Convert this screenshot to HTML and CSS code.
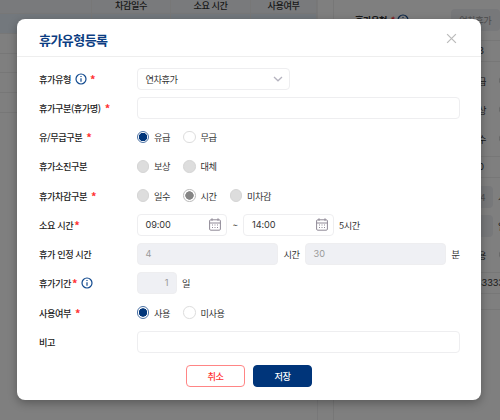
FILE: index.html
```
<!DOCTYPE html>
<html lang="ko">
<head>
    <meta charset="UTF-8">
    <meta name="viewport" content="width=device-width, initial-scale=1.0">
    <title>휴가유형등록</title>
    <link rel="stylesheet" href="styles.css">
</head>
<body>
    <!-- 휴가유형 관리 화면 -->
    <div class="page">
        <div class="list">
            <div class="list-row list-head"><span></span><span>차감일수</span><span>소요 시간</span><span>사용여부</span></div>
            <div class="list-row selected"><span></span><span></span><span></span><span></span></div>
            <div class="list-row"><span></span><span></span><span></span><span></span></div>
            <div class="list-row"><span></span><span></span><span></span><span></span></div>
            <div class="list-row"><span></span><span></span><span></span><span></span></div>
            <div class="list-row"><span></span><span></span><span></span><span></span></div>
        </div>
        <div class="detail">
            <div class="detail-row first">
                <b>휴가유형 <i>*</i></b>
                <svg class="info" viewBox="0 0 12 12"><circle cx="6" cy="6" r="5"/><path d="M6 5.2v3.6M6 3v1.1"/></svg>
                <span class="detail-box">연차휴가</span>
            </div>
            <div class="detail-row line"><span class="value number">3</span></div>
            <div class="detail-group">
                <div class="detail-row"><span class="value">유급</span><span class="dot"></span></div>
                <div class="detail-row"><span class="value">보상</span><span class="dot"></span></div>
                <div class="detail-row"><span class="value">일수</span><span class="dot"></span></div>
            </div>
            <div class="detail-row line"><span class="value number">0</span></div>
            <div class="detail-group">
                <div class="detail-row"><span class="detail-box small">4</span><span>시간</span></div>
                <div class="detail-row"><span class="detail-box small"></span><span>일</span></div>
                <div class="detail-row"><span class="value">사용</span><span class="dot"></span></div>
            </div>
            <div class="detail-row line"><span class="long">33333</span></div>
            <div class="detail-row line bottom"></div>
        </div>
    </div>

    <div class="overlay">
        <div class="modal">
            <div class="modal-header">
                <h1>휴가유형등록</h1>
                <svg class="close" viewBox="0 0 10 10"><path d="M1 1l8 8M9 1l-8 8"/></svg>
            </div>

            <form class="modal-body">
                <div class="row">
                    <div class="label">휴가유형
                        <svg class="info" viewBox="0 0 12 12"><circle cx="6" cy="6" r="5"/><path d="M6 5.2v3.6M6 3v1.1"/></svg>
                        <span class="required">*</span>
                    </div>
                    <div class="box select">연차휴가
                        <svg class="arrow" viewBox="0 0 10 6"><path d="M1 1l4 3.8L9 1"/></svg>
                    </div>
                </div>
                <div class="row">
                    <div class="label">휴가구분(휴가명) <span class="required">*</span></div>
                    <div class="box full"></div>
                </div>
                <div class="row">
                    <div class="label">유/무급구분 <span class="required">*</span></div>
                    <div class="radio"><span class="circle checked"></span>유급</div>
                    <div class="radio"><span class="circle"></span>무급</div>
                </div>
                <div class="row">
                    <div class="label">휴가소진구분</div>
                    <div class="radio"><span class="circle disabled"></span>보상</div>
                    <div class="radio"><span class="circle disabled"></span>대체</div>
                </div>
                <div class="row">
                    <div class="label">휴가차감구분 <span class="required">*</span></div>
                    <div class="radio"><span class="circle disabled"></span>일수</div>
                    <div class="radio"><span class="circle checked-disabled"></span>시간</div>
                    <div class="radio"><span class="circle disabled"></span>미차감</div>
                </div>
                <div class="row">
                    <div class="label tight">소요 시간<span class="required">*</span></div>
                    <div class="box time">09:00
                        <svg class="calendar" viewBox="0 0 12 13"><rect x="0.6" y="1.8" width="10.8" height="10.4" rx="1.2"/><path d="M0.6 5h10.8M3 0.3v2.6M9 0.3v2.6"/><path d="M5.5 7h1M8 7h1M3 9.5h1M5.5 9.5h1M8 9.5h1M3 7h1"/></svg>
                    </div>
                    <span class="tilde">~</span>
                    <div class="box time">14:00
                        <svg class="calendar" viewBox="0 0 12 13"><rect x="0.6" y="1.8" width="10.8" height="10.4" rx="1.2"/><path d="M0.6 5h10.8M3 0.3v2.6M9 0.3v2.6"/><path d="M5.5 7h1M8 7h1M3 9.5h1M5.5 9.5h1M8 9.5h1M3 7h1"/></svg>
                    </div>
                    <span class="unit">5시간</span>
                </div>
                <div class="row">
                    <div class="label">휴가 인정 시간</div>
                    <div class="box gray full">4</div>
                    <span class="unit hour">시간</span>
                    <div class="box gray full">30</div>
                    <span class="unit">분</span>
                </div>
                <div class="row">
                    <div class="label tight">휴가기간<span class="required">*</span>
                        <svg class="info" viewBox="0 0 12 12"><circle cx="6" cy="6" r="5"/><path d="M6 5.2v3.6M6 3v1.1"/></svg>
                    </div>
                    <div class="box gray day">1</div>
                    <span class="unit">일</span>
                </div>
                <div class="row">
                    <div class="label">사용여부 <span class="required">*</span></div>
                    <div class="radio"><span class="circle checked"></span>사용</div>
                    <div class="radio"><span class="circle"></span>미사용</div>
                </div>
                <div class="row">
                    <div class="label">비고</div>
                    <div class="box full"></div>
                </div>
            </form>

            <div class="buttons">
                <button type="button" class="cancel">취소</button>
                <button type="button" class="save">저장</button>
            </div>
        </div>
    </div>
</body>
</html>
```

FILE: styles.css
```
* {
    box-sizing: border-box;
}
body {
    margin: 0;
    width: 500px;
    height: 420px;
    overflow: hidden;
    position: relative;
    font-family: "Noto Sans CJK KR", sans-serif;
    font-size: 9.2px;
    letter-spacing: -0.45px;
    line-height: 14px;
    color: #333;
    background-color: #fff;
}
svg {
    fill: none;
    flex-shrink: 0;
}

/* 배경 화면 */
.page {
    display: flex;
    height: 420px;
}
.list {
    width: 318px;
    border-right: 1px solid #f0f0f2;
}
.list-row {
    display: grid;
    grid-template-columns: 92px 79px 80px 1fr;
    height: 19.8px;
    border-bottom: 1px solid #eee;
}
.list-row span {
    border-right: 1px solid #eee;
    text-align: center;
}
.list-head {
    height: 14px;
    background-color: #f3f5f9;
    font-weight: 500;
    line-height: 10px;
}
.selected {
    background-color: #e7f1fa;
}
.detail {
    width: 167px;
    margin-left: 15px;
    border-left: 1px solid #eee;
    overflow: hidden;
}
.detail-row {
    display: flex;
    align-items: center;
    height: 29.2px;
    padding-left: 114px;
    white-space: nowrap;
}
.detail-row.first {
    height: 41px;
    padding-left: 21px;
    border-bottom: 1px solid #eee;
}
.detail-row.line {
    height: 21px;
    border-bottom: 1px solid #eee;
}
.detail-row.bottom {
    height: 16px;
}
.detail-group {
    height: 95px;
    padding-top: 4px;
    border-bottom: 1px solid #eee;
}
.detail-row i {
    color: #f33;
}
.value {
    width: 38px;
    margin-right: 13px;
    text-align: right;
    flex-shrink: 0;
}
.number {
    width: 35.5px;
    font-family: Inter, sans-serif;
}
.long {
    margin-left: 28px;
    font-family: Inter, sans-serif;
    letter-spacing: -0.1px;
}
.detail-box {
    width: 60px;
    height: 22px;
    margin-left: 42px;
    padding: 4px 8px;
    border-radius: 4px;
    color: #999;
    background-color: #eff0f4;
}
.detail-box.small {
    width: 45px;
    margin: 0 5px 0 0;
    text-align: right;
    flex-shrink: 0;
}
.dot {
    width: 13px;
    height: 13px;
    border-radius: 50%;
    border: 1px solid #ccc;
    flex-shrink: 0;
}

/* 모달 */
.overlay {
    position: absolute;
    inset: 0;
    display: flex;
    justify-content: center;
    align-items: flex-start;
    padding: 19px 19px 0 17px;
    background-color: rgba(0, 0, 0, 0.5);
}
.modal {
    width: 464px;
    height: 381px;
    border-radius: 8px;
    background-color: #fff;
    box-shadow: 0 3px 10px rgba(0, 0, 0, 0.3);
}
.modal-header {
    display: flex;
    justify-content: space-between;
    align-items: center;
    height: 38px;
    padding: 4px 24px 0 22px;
    border-bottom: 1px solid #eee;
}
h1 {
    margin: 0;
    padding-top: 1px;
    font-size: 13px;
    font-weight: 700;
    letter-spacing: -0.55px;
    color: #0b3d82;
}
.close {
    width: 11px;
    height: 11px;
    margin-bottom: 2px;
    stroke: #bbb;
    stroke-width: 1.1;
}
.modal-body {
    padding: 7px 21.5px 0 22px;
}
.row {
    display: flex;
    align-items: center;
    height: 29.25px;
}
.label {
    display: flex;
    align-items: center;
    width: 97.5px;
    flex-shrink: 0;
    font-weight: 500;
    color: #222;
}
.required {
    margin-left: 4px;
    font-size: 11px;
    font-weight: 700;
    color: #f33;
}
.info + .required {
    margin-left: 3px;
}
.tight .required {
    margin-left: 1px;
}
.info {
    width: 12px;
    height: 12px;
    margin-left: 4px;
    stroke: #124a8f;
    stroke-width: 1.2;
}
.box {
    display: flex;
    align-items: center;
    height: 22px;
    padding: 0 8px;
    border: 1px solid #eeeef0;
    border-radius: 4px;
}
.full {
    flex: 1;
}
.select {
    width: 153.5px;
    justify-content: space-between;
}
.arrow {
    width: 10px;
    height: 6px;
    margin-right: -2px;
    stroke: #b5b3bf;
    stroke-width: 1.3;
}
.gray {
    color: #999;
    background-color: #eff0f4;
    font-family: Inter, sans-serif;
    letter-spacing: 0;
}
.time {
    width: 90.5px;
    padding-right: 5px;
    justify-content: space-between;
    font-family: Inter, sans-serif;
    letter-spacing: -0.1px;
}
.calendar {
    width: 12px;
    height: 13px;
    stroke: #8f8996;
    stroke-width: 1;
}
.tilde {
    width: 16px;
    text-align: center;
}
.day {
    width: 40px;
    padding-right: 7px;
    justify-content: flex-end;
}
.unit {
    margin-left: 5.5px;
}
.hour {
    margin-right: 5px;
}
.radio {
    display: flex;
    align-items: center;
    margin-right: 13px;
}
.circle {
    width: 12.5px;
    height: 12.5px;
    margin-right: 5px;
    border: 1px solid #ddd;
    border-radius: 50%;
}
.checked {
    border-color: #4d73a5;
    background: radial-gradient(circle, #00357a 3.9px, #fff 4.5px);
}
.disabled {
    border-color: #d5d5d5;
    background-color: #ddd;
}
.checked-disabled {
    border-color: #bbb;
    background: radial-gradient(circle, #858585 3.9px, #fff 4.5px);
}
.buttons {
    display: flex;
    justify-content: center;
    gap: 7.5px;
    margin-top: 8.5px;
}
button {
    width: 59.5px;
    height: 22px;
    padding: 0;
    border: 1px solid #ff8585;
    border-radius: 4px;
    font-family: inherit;
    font-size: 9.2px;
    font-weight: 500;
    letter-spacing: -0.45px;
    line-height: 18px;
    color: #f33;
    background-color: #fff;
}
.save {
    border-color: #00357a;
    color: #fff;
    background-color: #00357a;
}
```
